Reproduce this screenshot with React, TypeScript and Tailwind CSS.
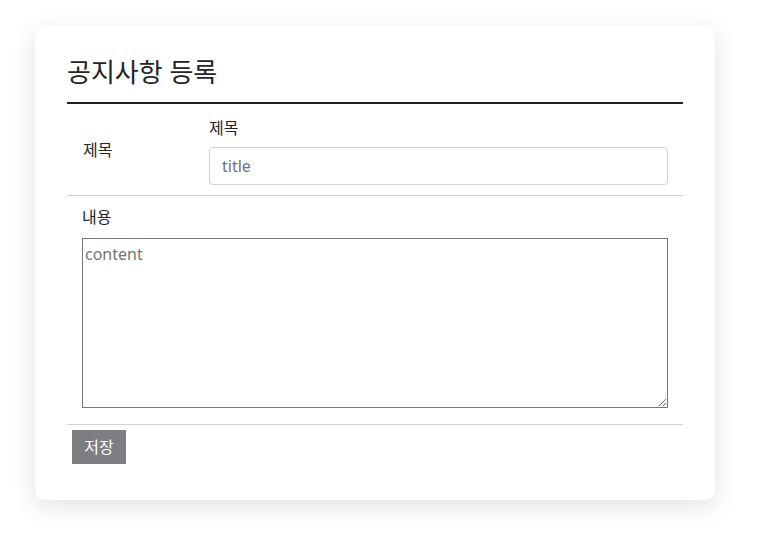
export default function App() {
  return (
    <div className="min-h-[537px] w-[770px] bg-white pt-[26px] pl-[35px] font-['Noto_Sans','Noto_Sans_CJK_KR',sans-serif] text-[#212529]">
      <div className="w-[680px] h-[474px] rounded-[10px] bg-white shadow-[0_6px_24px_rgba(0,0,0,0.12)] px-8 pt-[30px]">
        {/* Header */}
        <h2 className="text-[26px] leading-[32px] font-normal pb-[14px] border-b-2 border-[#222]">
          공지사항 등록
        </h2>

        {/* Title row */}
        <div className="flex border-b border-[#cfcfcf]">
          <div className="w-[142px] shrink-0 flex items-center pl-4 text-[16px] leading-6">제목</div>
          <div className="flex-1 pr-[15px] pt-[12px] pb-[10px]">
            <div className="text-[16px] leading-6 mb-[7px]">제목</div>
            <input
              placeholder="title"
              className="w-full h-[38px] rounded-[4px] border border-[#ced4da] px-3 text-[16px] placeholder-[#6c757d] outline-none"
            />
          </div>
        </div>

        {/* Content row */}
        <div className="border-b border-[#cfcfcf] px-[15px] pt-[9px] pb-[16px]">
          <div className="text-[16px] leading-6 mb-[9px]">내용</div>
          <textarea
            placeholder="content"
            className="block w-full h-[170px] border border-[#767676] px-[2px] py-[3px] text-[16px] leading-[24px] placeholder-[#757575] outline-none resize-y"
          />
        </div>

        {/* Save */}
        <div className="pt-[5px] pl-[5px]">
          <button className="w-[54px] h-[34px] bg-[#7d7e82] text-white text-[16px] leading-6">저장</button>
        </div>
      </div>
    </div>
  )
}
